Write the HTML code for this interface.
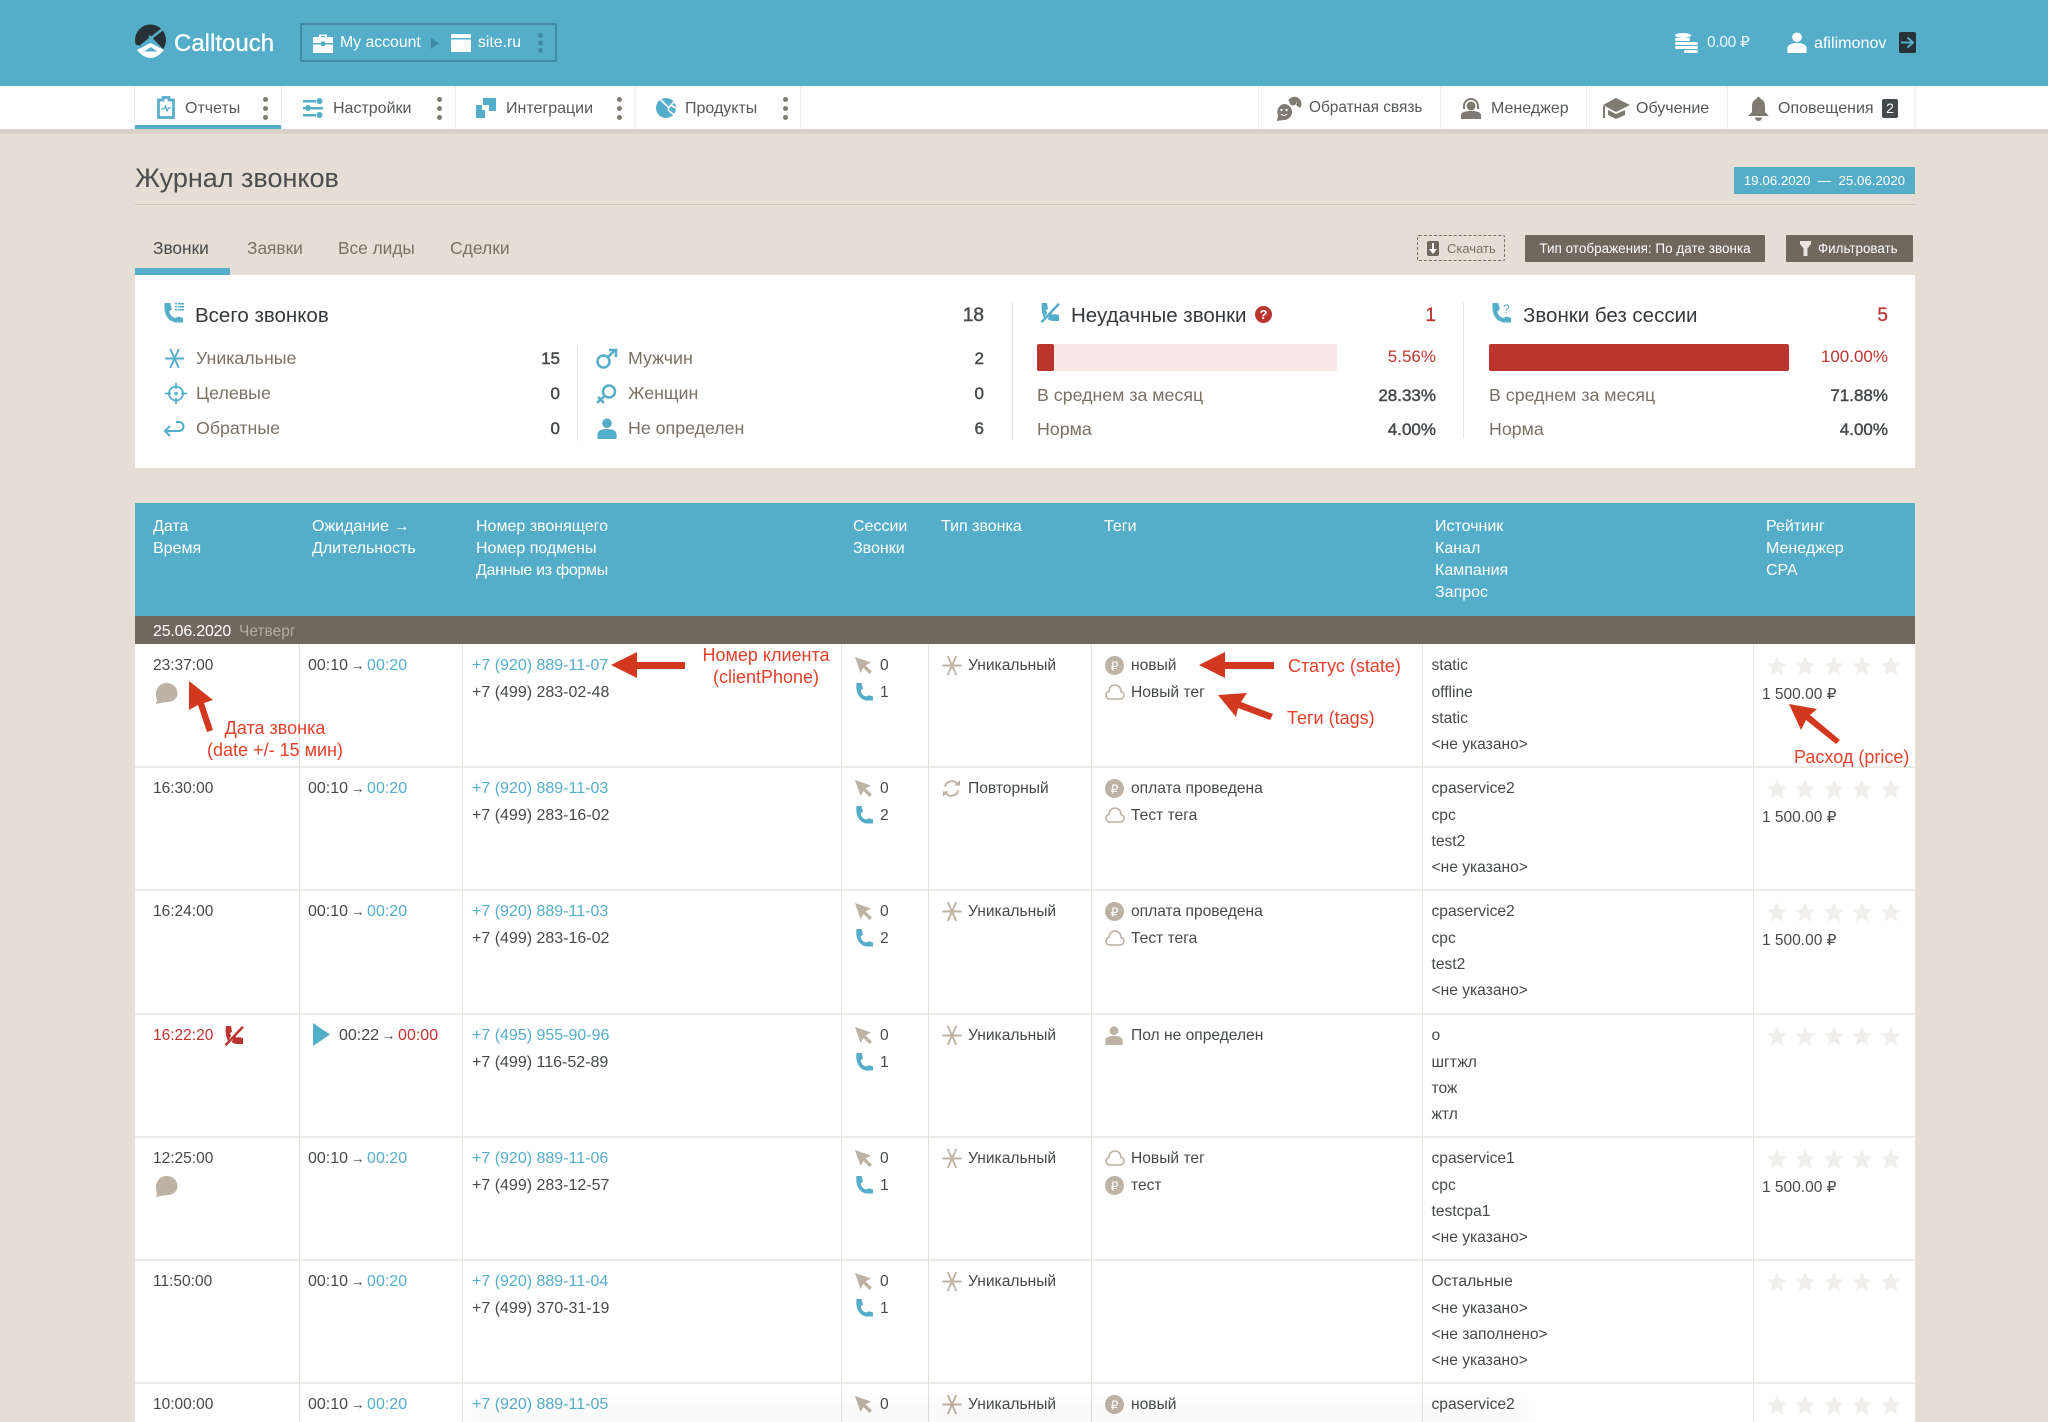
<!DOCTYPE html>
<html lang="ru"><head><meta charset="utf-8"><title>Журнал звонков</title>
<style>
html,body{margin:0;padding:0;width:2048px;height:1422px;overflow:hidden;background:#e5ded5}
#p{position:relative;width:2048px;height:1422px;overflow:hidden;background:#e5ded5;font-family:"Liberation Sans","DejaVu Sans",sans-serif;color:#45494b;font-size:15.600px}
.b{position:absolute}
.t{position:absolute;white-space:nowrap;line-height:20px}
svg{position:absolute;overflow:visible}
.w{color:#fff}
.r{position:absolute;left:135px;width:1780px;height:123px;background:#fff}
.hr{position:absolute;left:135px;width:1780px;height:2px;background:#efebe6}
.row{position:absolute;left:0;top:0;width:2048px}
.row .t{margin-top:1px}
.n{font-size:16px}
.tm{font-size:15.500px;margin-top:.5px!important}
.ar{display:inline-block;width:19px;text-align:center;font-size:14px;line-height:1;color:#45494b}
.l{color:#54aeca}
.red{color:#c0322d}
.h{font-size:16px;color:#fff;margin-top:1px}
.nav{font-size:16px;color:#55585a;margin-top:1px}
.sl{font-size:17.800px;color:#7a7165}
.sv{font-size:17px;color:#45494b;text-align:right;-webkit-text-stroke:.45px #45494b;margin-top:1px}
.st{font-size:20.500px;color:#35393c;margin-top:1px}
.an{font-family:"Liberation Sans",sans-serif;font-size:18px;color:#e5402a;text-align:center}
</style></head><body>
<div id="p">
<svg width="0" height="0" style="position:absolute">
<defs>
<symbol id="star" viewBox="0 0 20 20"><polygon points="10,0 13,7 20,7.600 14.600,12 16.400,20 10,15.600 3.600,20 5.400,12 0,7.600 7,7" fill="#f1efeb"/></symbol>
<symbol id="cur" viewBox="0 0 17 17"><path d="M0 0L16 5.500 10.500 8.500 17 14.500 14.500 17 8.500 11 5.500 16Z" fill="#bdb2a4"/></symbol>
<symbol id="ph" viewBox="0 0 18 18"><path d="M1.500 0h5l1.500 5.500-2.300 2c.3 3 2.300 5 5.300 6l3-1.300L18 13.500V17.500h-4.500C6 18 0 11 1.500 0Z" fill="#54aeca"/></symbol>
<symbol id="ast" viewBox="0 0 20 20"><path d="M0 10H20M5.500 0L14.500 20M14.500 0L5.500 20" stroke="currentColor" stroke-width="2" fill="none"/></symbol>
<symbol id="rep" viewBox="0 0 20 20"><path d="M3 8A7.500 7.500 0 0 1 16 5M17 12A7.500 7.500 0 0 1 4 15" stroke="#bdb2a4" stroke-width="2" fill="none"/><path d="M13 7H19V1ZM7 13H1V19Z" fill="#bdb2a4"/></symbol>
<symbol id="rub" viewBox="0 0 20 20"><circle cx="10" cy="10" r="10" fill="#bdb2a4"/><text x="10" y="15" font-size="13" fill="#fff" text-anchor="middle" font-family="Liberation Sans,DejaVu Sans,sans-serif">₽</text></symbol>
<symbol id="cld" viewBox="0 0 20 16"><path d="M5 15C2 15 1 13 1 11S2 8 4 7.500C4 3.500 7 1 10 1s6 2.500 6 6.500c2 .5 3 2 3 3.500s-1 4-4 4Z" stroke="#bdb2a4" stroke-width="1.600" fill="none"/></symbol>
<symbol id="bub" viewBox="0 0 23 22"><path d="M11.500 0C18 0 23 4.500 23 10.500S18 20 12 20C8 20 4 21.500 0 22 2 19.500 1.500 17 .8 14.500-.8 7 4 0 11.500 0Z" fill="#bdb2a4"/></symbol>
<symbol id="usr" viewBox="0 0 20 22"><circle cx="10" cy="5.500" r="5" fill="currentColor"/><path d="M0 22V17C0 13 5 11.500 10 11.500S20 13 20 17V22Z" fill="currentColor"/></symbol>
<symbol id="fail" viewBox="0 0 20 20"><path d="M2 0h5l1 6-2 1 1 3-3 5C2 11 1 5 2 0ZM11 10l2 2 1-1 5 1v6h-6.500a11 11 0 0 1-5-2ZM18 0l2 1.500L2.500 20 .5 18.500Z" fill="currentColor"/></symbol>
<symbol id="dot3" viewBox="0 0 5 23"><circle cx="2.500" cy="2.500" r="2.500" fill="#7f7a72"/><circle cx="2.500" cy="11.500" r="2.500" fill="#7f7a72"/><circle cx="2.500" cy="20.500" r="2.500" fill="#7f7a72"/></symbol>
</defs></svg>

<!-- header -->
<div class="b" style="left:0;top:0;width:2048px;height:86px;background:#54aeca"></div>
<svg style="left:135px;top:25px" width="31" height="34" viewBox="0 0 31 34"><circle cx="15.500" cy="15" r="15.500" fill="#263238"/><path d="M29 3L6 21M14 11L31 29" stroke="#54aeca" stroke-width="2.500" fill="none"/><path d="M-1 19L6 21 15.500 13 31 29 31 34H0Z" fill="#54aeca"/><path d="M15.500 18L2 25Q15.500 41 29 25Z" fill="#fff"/><path d="M15.700 22L9 26.500H22.300Z" fill="#54aeca"/></svg>
<div class="t w" style="left:174px;top:34px;font-size:24px;-webkit-text-stroke:.3px #fff">Calltouch</div>
<div class="b" style="left:300px;top:23px;width:257px;height:39px;box-sizing:border-box;border:2px solid #3f89a6;border-radius:2px"></div>
<svg style="left:313px;top:33px" width="20" height="20" viewBox="0 0 20 20"><path d="M6 4V1.500h8V4H20v6H12V8.500H8V10H0V4ZM8 4h4V3H8ZM0 11.500h8V13h4v-1.500h8V20H0Z" fill="#fff"/></svg>
<div class="t w" style="left:340px;top:33px;font-size:15.800px">My account</div>
<svg style="left:431px;top:38px" width="8" height="11"><path d="M0 0L8 5.500 0 11Z" fill="#3f89a6"/></svg>
<svg style="left:451px;top:34px" width="20" height="18"><path d="M1 0H19a1 1 0 0 1 1 1V4H0V1a1 1 0 0 1 1-1ZM0 5.500H20V17a1 1 0 0 1-1 1H1a1 1 0 0 1-1-1Z" fill="#fff"/></svg>
<div class="t w" style="left:478px;top:33px;font-size:15.800px">site.ru</div>
<svg style="left:538px;top:33px" width="5" height="20"><circle cx="2.500" cy="2.500" r="2.500" fill="#3f89a6"/><circle cx="2.500" cy="10" r="2.500" fill="#3f89a6"/><circle cx="2.500" cy="17.500" r="2.500" fill="#3f89a6"/></svg>

<svg style="left:1674px;top:33px" width="24" height="20" viewBox="0 0 24 20"><g fill="#fff"><ellipse cx="9" cy="2.500" rx="8" ry="2.500"/><rect x="1" y="5" width="15" height="3" rx="1.500"/><rect x="1" y="9" width="15" height="3" rx="1.500"/><rect x="1" y="13" width="10" height="3" rx="1.500"/><rect x="10" y="9" width="14" height="3" rx="1.500"/><rect x="10" y="13" width="14" height="3" rx="1.500"/><rect x="10" y="17" width="14" height="3" rx="1.500"/></g></svg>
<div class="t w" style="left:1707px;top:33px;font-size:15.500px;letter-spacing:-.3px;opacity:.9">0.00 ₽</div>
<svg style="left:1787px;top:32px;color:#fff" width="20" height="21"><use href="#usr"/></svg>
<div class="t w" style="left:1814px;top:33px;font-size:16.100px">afilimonov</div>
<div class="b" style="left:1899px;top:32px;width:17px;height:21px;background:#263238;border-radius:2px"></div>
<svg style="left:1901px;top:36px" width="13" height="13"><path d="M0 6.500H11M6.500 1.500L12 6.500 6.500 11.500" stroke="#54aeca" stroke-width="2" fill="none"/></svg>

<!-- nav -->
<div class="b" style="left:0;top:86px;width:2048px;height:43px;background:#fff"></div>
<div class="b" style="left:0;top:129px;width:2048px;height:5px;background:#d8d1c8"></div>
<div class="b" style="left:135px;top:125px;width:146px;height:4px;background:#54aeca"></div>
<div class="b" style="left:134px;top:86px;width:1px;height:43px;background:#eeeeee"></div>
<div class="b" style="left:281px;top:86px;width:1px;height:43px;background:#eeeeee"></div>
<div class="b" style="left:455px;top:86px;width:1px;height:43px;background:#eeeeee"></div>
<div class="b" style="left:635px;top:86px;width:1px;height:43px;background:#eeeeee"></div>
<div class="b" style="left:800px;top:86px;width:1px;height:43px;background:#eeeeee"></div>
<div class="b" style="left:1258px;top:86px;width:1px;height:43px;background:#eeeeee"></div>
<div class="b" style="left:1440px;top:86px;width:1px;height:43px;background:#eeeeee"></div>
<div class="b" style="left:1586px;top:86px;width:1px;height:43px;background:#eeeeee"></div>
<div class="b" style="left:1727px;top:86px;width:1px;height:43px;background:#eeeeee"></div>
<div class="b" style="left:1915px;top:86px;width:1px;height:43px;background:#eeeeee"></div>

<svg style="left:157px;top:96px" width="18" height="23" viewBox="0 0 18 23"><path d="M1.500 4H6V1.500h6V4H16.500V21.500H1.500Z" fill="none" stroke="#54aeca" stroke-width="2.700"/><path d="M4 13H7L8.500 10 10 15 11.500 12H14" stroke="#54aeca" stroke-width="1.300" fill="none"/></svg>
<div class="t nav" style="left:185px;top:98px">Отчеты</div>
<svg style="left:263px;top:97px" width="5" height="23"><use href="#dot3"/></svg>
<svg style="left:303px;top:98px" width="20" height="20" viewBox="0 0 20 20"><g fill="#54aeca"><rect x="0" y="2" width="13" height="2.500"/><circle cx="16.500" cy="3" r="3"/><rect x="8" y="9" width="12" height="2.500"/><rect x="0" y="9" width="2" height="2.500"/><circle cx="5" cy="10" r="3"/><rect x="0" y="16" width="13" height="2.500"/><circle cx="16.500" cy="17" r="3"/></g></svg>
<div class="t nav" style="left:333px;top:98px">Настройки</div>
<svg style="left:437px;top:97px" width="5" height="23"><use href="#dot3"/></svg>
<svg style="left:476px;top:98px" width="20" height="20" viewBox="0 0 20 20"><path d="M7 0H20V13H13V7H7ZM0 7H6V12H9V20H0Z" fill="#54aeca"/></svg>
<div class="t nav" style="left:506px;top:98px">Интеграции</div>
<svg style="left:617px;top:97px" width="5" height="23"><use href="#dot3"/></svg>
<svg style="left:656px;top:98px" width="20" height="20" viewBox="0 0 20 20"><circle cx="10" cy="10" r="10" fill="#54aeca"/><path d="M3.500 .5L12.500 9.500 19 3M12.500 9.500V12.500L19.500 18M14 7L21 10.500" stroke="#fff" stroke-width="1.600" fill="none"/></svg>
<div class="t nav" style="left:685px;top:98px">Продукты</div>
<svg style="left:783px;top:97px" width="5" height="23"><use href="#dot3"/></svg>

<svg style="left:1276px;top:95px" width="26" height="26" viewBox="0 0 26 26"><g fill="#7f7a72"><path d="M12 6A7 7 0 1 1 24 13L20 10A3 3 0 1 0 15 7Z"/><circle cx="17" cy="7" r="3.500" fill="#7f7a72"/><path d="M8 9A8 8 0 1 1 8 25L1 26 2 20A8 8 0 0 1 8 9Z"/></g><circle cx="5.500" cy="15" r="1.200" fill="#fff"/><circle cx="10.500" cy="15" r="1.200" fill="#fff"/><path d="M5 19Q8 22 11 19" stroke="#fff" fill="none"/></svg>
<div class="t nav" style="left:1309px;top:97px;font-size:15.400px">Обратная связь</div>
<svg style="left:1460px;top:97px" width="22" height="22" viewBox="0 0 22 22"><path d="M3 9A8 8 0 0 1 19 9V12H17V9A6 6 0 0 0 5 9V12H3Z" fill="#7f7a72"/><circle cx="11" cy="9" r="4.500" fill="#7f7a72"/><path d="M1 22V18C1 15 6 14 11 14S21 15 21 18V22Z" fill="#7f7a72"/></svg>
<div class="t nav" style="left:1491px;top:98px">Менеджер</div>
<svg style="left:1603px;top:98px" width="27" height="22" viewBox="0 0 27 22"><path d="M13 0L27 7 13 14 0 7ZM5 12L13 16 22 12V17L13 21 5 17Z" fill="#7f7a72"/><rect x="0" y="8" width="2" height="12" fill="#7f7a72"/></svg>
<div class="t nav" style="left:1636px;top:98px">Обучение</div>
<svg style="left:1747px;top:97px" width="23" height="24" viewBox="0 0 23 24"><path d="M11.500 0A2 2 0 0 1 13.500 2C17 3 18 6 18 10V15L22 19H1L5 15V10C5 6 6 3 9.500 2A2 2 0 0 1 11.500 0ZM8 20.500H15A3.500 3.500 0 0 1 8 20.500Z" fill="#7f7a72"/></svg>
<div class="t nav" style="left:1778px;top:98px">Оповещения</div>
<div class="b w" style="left:1882px;top:99px;width:16px;height:19px;background:#44494c;border-radius:2px;text-align:center;line-height:19px;font-size:14px">2</div>

<!-- title -->
<div class="t" style="left:135px;top:163px;font-size:27px;line-height:30px;color:#4a4d4e">Журнал звонков</div>
<div class="b" style="left:135px;top:204px;width:1780px;height:1px;background:#cfc8bd"></div>
<div class="b w" style="left:1734px;top:167px;width:181px;height:27px;background:#54aeca;text-align:center;line-height:27px;font-size:13.300px">19.06.2020 &nbsp;—&nbsp; 25.06.2020</div>

<div class="t" style="left:153px;top:238px;font-size:17.300px;color:#45494b">Звонки</div>
<div class="t" style="left:247px;top:238px;font-size:17.300px;color:#7a7165">Заявки</div>
<div class="t" style="left:338px;top:238px;font-size:17.300px;color:#7a7165">Все лиды</div>
<div class="t" style="left:450px;top:238px;font-size:17.500px;color:#7a7165">Сделки</div>
<div class="b" style="left:135px;top:268px;width:95px;height:7px;background:#54aeca"></div>

<div class="b" style="left:1417px;top:235px;width:88px;height:26px;box-sizing:border-box;border:1.500px dashed #7a7165;border-radius:2px"></div>
<div class="b" style="left:1427px;top:241px;width:12px;height:15px;background:#70685c;border-radius:2px"></div>
<svg style="left:1429px;top:243px" width="8" height="11"><path d="M3 0H5V6H8L4 11 0 6H3Z" fill="#fff"/></svg>
<div class="t" style="left:1447px;top:239px;font-size:13px;color:#7a7165">Скачать</div>
<div class="b w" style="left:1525px;top:235px;width:240px;height:27px;background:#70685c;text-align:center;line-height:27px;font-size:13.500px;border-radius:1px">Тип отображения: По дате звонка</div>
<div class="b" style="left:1786px;top:235px;width:127px;height:27px;background:#70685c;border-radius:1px"></div>
<svg style="left:1800px;top:241px" width="11" height="15"><path d="M0 0H11V3L7.500 7.500V15H3.500V7.500L0 3Z" fill="#e9e5df"/></svg>
<div class="t w" style="left:1818px;top:239px;font-size:13.400px">Фильтровать</div>

<!-- stats -->
<div class="b" style="left:135px;top:275px;width:1780px;height:193px;background:#fff"></div>
<div class="b" style="left:1012px;top:302px;width:1px;height:136px;background:#e8e3dc"></div>
<div class="b" style="left:1463px;top:302px;width:1px;height:136px;background:#e8e3dc"></div>
<div class="b" style="left:577px;top:345px;width:1px;height:96px;background:#e8e3dc"></div>

<svg style="left:163px;top:303px" width="20" height="20"><use href="#ph"/></svg>
<svg style="left:175px;top:303px" width="9" height="9"><path d="M0 0H2V1.500H0ZM3 0H9V1.500H3ZM0 3H2V4.500H0ZM3 3H9V4.500H3ZM0 6H2V7.500H0ZM3 6H9V7.500H3Z" fill="#54aeca"/></svg>
<div class="t st" style="left:195px;top:305px">Всего звонков</div>
<div class="t sv" style="left:900px;width:84px;top:305px;font-size:19px">18</div>

<svg style="left:164px;top:349px;color:#54aeca" width="21" height="19"><use href="#ast"/></svg>
<div class="t sl" style="left:196px;top:348px">Уникальные</div><div class="t sv" style="left:500px;width:60px;top:348px">15</div>
<svg style="left:165px;top:383px" width="22" height="21" viewBox="0 0 22 21"><circle cx="11" cy="10.500" r="7" stroke="#54aeca" stroke-width="1.800" fill="none"/><circle cx="11" cy="10.500" r="1.800" fill="#54aeca"/><path d="M11 0V6M11 15V21M0 10.500H6M16 10.500H22" stroke="#54aeca" stroke-width="1.800"/></svg>
<div class="t sl" style="left:196px;top:383px">Целевые</div><div class="t sv" style="left:500px;width:60px;top:383px">0</div>
<svg style="left:164px;top:421px" width="20" height="16" viewBox="0 0 20 16"><path d="M12 1H15A4 4 0 0 1 15 10H2" stroke="#54aeca" stroke-width="2" fill="none"/><path d="M6 5L1 10 6 15" stroke="#54aeca" stroke-width="2" fill="none"/></svg>
<div class="t sl" style="left:196px;top:418px">Обратные</div><div class="t sv" style="left:500px;width:60px;top:418px">0</div>

<svg style="left:596px;top:349px" width="21" height="20" viewBox="0 0 21 20"><circle cx="7.500" cy="12.500" r="6" stroke="#54aeca" stroke-width="2.500" fill="none"/><path d="M12 8L19 1M13 1H20V8" stroke="#54aeca" stroke-width="2.500" fill="none"/></svg>
<div class="t sl" style="left:628px;top:348px">Мужчин</div><div class="t sv" style="left:900px;width:84px;top:348px">2</div>
<svg style="left:596px;top:384px" width="21" height="20" viewBox="0 0 21 20"><circle cx="13" cy="7.500" r="6" stroke="#54aeca" stroke-width="2.500" fill="none"/><path d="M8.500 12L1 19M2 13L8 19" stroke="#54aeca" stroke-width="2.500" fill="none"/></svg>
<div class="t sl" style="left:628px;top:383px">Женщин</div><div class="t sv" style="left:900px;width:84px;top:383px">0</div>
<svg style="left:597px;top:418px;color:#54aeca" width="20" height="21"><use href="#usr"/></svg>
<div class="t sl" style="left:628px;top:418px">Не определен</div><div class="t sv" style="left:900px;width:84px;top:418px">6</div>

<svg style="left:1040px;top:303px;color:#54aeca" width="20" height="20"><use href="#fail"/></svg>
<div class="t st" style="left:1071px;top:305px">Неудачные звонки</div>
<div class="b w" style="left:1255px;top:306px;width:17px;height:17px;border-radius:50%;background:#bb352f;text-align:center;line-height:17px;font-size:13px;font-weight:bold">?</div>
<div class="t sv" style="left:1380px;width:56px;top:305px;font-size:19px;color:#bb352f;-webkit-text-stroke:.3px #bb352f">1</div>
<div class="b" style="left:1037px;top:344px;width:300px;height:27px;background:#f8e9e7;border-radius:2px"></div>
<div class="b" style="left:1037px;top:344px;width:17px;height:27px;background:#bb352f;border-radius:2px"></div>
<div class="t sl" style="left:1360px;width:76px;text-align:right;top:347px;color:#bb352f;font-size:17px">5.56%</div>
<div class="t sl" style="left:1037px;top:385px">В среднем за месяц</div><div class="t sv" style="left:1360px;width:76px;top:385px">28.33%</div>
<div class="t sl" style="left:1037px;top:419px">Норма</div><div class="t sv" style="left:1360px;width:76px;top:419px">4.00%</div>

<svg style="left:1491px;top:303px" width="20" height="20"><use href="#ph"/></svg>
<div class="t" style="left:1503px;top:299px;font-size:12px;color:#54aeca">?</div>
<div class="t st" style="left:1523px;top:305px">Звонки без сессии</div>
<div class="t sv" style="left:1830px;width:58px;top:305px;font-size:19px;color:#bb352f;-webkit-text-stroke:.3px #bb352f">5</div>
<div class="b" style="left:1489px;top:344px;width:300px;height:27px;background:#bb352f;border-radius:2px"></div>
<div class="t sl" style="left:1790px;width:98px;text-align:right;top:347px;color:#bb352f;font-size:17px">100.00%</div>
<div class="t sl" style="left:1489px;top:385px">В среднем за месяц</div><div class="t sv" style="left:1810px;width:78px;top:385px">71.88%</div>
<div class="t sl" style="left:1489px;top:419px">Норма</div><div class="t sv" style="left:1810px;width:78px;top:419px">4.00%</div>

<!-- table head -->
<div class="b" style="left:135px;top:503px;width:1780px;height:113px;background:#54aeca"></div>
<div class="t h" style="left:153px;top:516px">Дата</div><div class="t h" style="left:153px;top:538px">Время</div>
<div class="t h" style="left:312px;top:516px">Ожидание →</div><div class="t h" style="left:312px;top:538px">Длительность</div>
<div class="t h" style="left:476px;top:516px">Номер звонящего</div><div class="t h" style="left:476px;top:538px">Номер подмены</div><div class="t h" style="left:476px;top:560px;letter-spacing:-.3px">Данные из формы</div>
<div class="t h" style="left:853px;top:516px">Сессии</div><div class="t h" style="left:853px;top:538px">Звонки</div>
<div class="t h" style="left:941px;top:516px">Тип звонка</div>
<div class="t h" style="left:1104px;top:516px">Теги</div>
<div class="t h" style="left:1435px;top:516px">Источник</div><div class="t h" style="left:1435px;top:538px">Канал</div><div class="t h" style="left:1435px;top:560px">Кампания</div><div class="t h" style="left:1435px;top:582px">Запрос</div>
<div class="t h" style="left:1766px;top:516px">Рейтинг</div><div class="t h" style="left:1766px;top:538px">Менеджер</div><div class="t h" style="left:1766px;top:560px">CPA</div>

<div class="b" style="left:135px;top:616px;width:1780px;height:28px;background:#70685c"></div>
<div class="t w" style="left:153px;top:622px;font-size:16px;letter-spacing:-.2px">25.06.2020</div>
<div class="t" style="left:239px;top:622px;font-size:15.500px;color:#b5ac9f">Четверг</div>

<!-- rows bg -->
<div class="r" style="top:644px"></div>
<div class="r" style="top:767px"></div>
<div class="r" style="top:890px;height:124px"></div>
<div class="r" style="top:1014px"></div>
<div class="r" style="top:1137px"></div>
<div class="r" style="top:1260px"></div>
<div class="r" style="top:1383px;height:39px"></div>
<div class="hr" style="top:766px"></div>
<div class="hr" style="top:889px"></div>
<div class="hr" style="top:1013px"></div>
<div class="hr" style="top:1136px"></div>
<div class="hr" style="top:1259px"></div>
<div class="hr" style="top:1382px"></div>
<div class="b" style="left:299px;top:644px;width:1px;height:778px;background:#e5e0d9"></div>
<div class="b" style="left:462px;top:644px;width:1px;height:778px;background:#e5e0d9"></div>
<div class="b" style="left:841px;top:644px;width:1px;height:778px;background:#e5e0d9"></div>
<div class="b" style="left:928px;top:644px;width:1px;height:778px;background:#e5e0d9"></div>
<div class="b" style="left:1091px;top:644px;width:1px;height:778px;background:#e5e0d9"></div>
<div class="b" style="left:1422px;top:644px;width:1px;height:778px;background:#e5e0d9"></div>
<div class="b" style="left:1753px;top:644px;width:1px;height:778px;background:#e5e0d9"></div>

<!-- row 1 -->
<div class="row" style="top:644px">
<div class="t tm" style="left:153px;top:11px">23:37:00</div>
<svg style="left:155px;top:39px" width="23" height="21"><use href="#bub"/></svg>
<div class="t n" style="left:308px;top:11px">00:10<span class="ar">→</span><span class="l">00:20</span></div>
<div class="t n l" style="left:472px;top:11px">+7 (920) 889-11-07</div><div class="t n" style="left:472px;top:38px">+7 (499) 283-02-48</div>
<svg style="left:855px;top:13px" width="17" height="17"><use href="#cur"/></svg><div class="t" style="left:880px;top:11px">0</div>
<svg style="left:855px;top:39px" width="18" height="18"><use href="#ph"/></svg><div class="t" style="left:880px;top:38px">1</div>
<svg style="left:942px;top:12px;color:#bdb2a4" width="20" height="19"><use href="#ast"/></svg><div class="t" style="left:968px;top:11px">Уникальный</div>
<svg style="left:1105px;top:12px" width="19" height="19"><use href="#rub"/></svg><div class="t" style="left:1131px;top:11px">новый</div>
<svg style="left:1105px;top:40px" width="20" height="16"><use href="#cld"/></svg><div class="t" style="left:1131px;top:38px">Новый тег</div>
<div class="t" style="left:1431.500px;top:11px">static</div><div class="t" style="left:1431.500px;top:38px">offline</div><div class="t" style="left:1431.500px;top:64px">static</div><div class="t" style="left:1431.500px;top:90px">&lt;не указано&gt;</div>
<svg style="left:1767px;top:12px" width="20" height="20"><use href="#star"/></svg><svg style="left:1795px;top:12px" width="20" height="20"><use href="#star"/></svg><svg style="left:1824px;top:12px" width="20" height="20"><use href="#star"/></svg><svg style="left:1852px;top:12px" width="20" height="20"><use href="#star"/></svg><svg style="left:1881px;top:12px" width="20" height="20"><use href="#star"/></svg>
<div class="t n" style="left:1762px;top:40px;font-size:15.500px">1 500.00 ₽</div>
</div>
<!-- row 2 -->
<div class="row" style="top:767px">
<div class="t tm" style="left:153px;top:11px">16:30:00</div>
<div class="t n" style="left:308px;top:11px">00:10<span class="ar">→</span><span class="l">00:20</span></div>
<div class="t n l" style="left:472px;top:11px">+7 (920) 889-11-03</div><div class="t n" style="left:472px;top:38px">+7 (499) 283-16-02</div>
<svg style="left:855px;top:13px" width="17" height="17"><use href="#cur"/></svg><div class="t" style="left:880px;top:11px">0</div>
<svg style="left:855px;top:39px" width="18" height="18"><use href="#ph"/></svg><div class="t" style="left:880px;top:38px">2</div>
<svg style="left:942px;top:12px" width="19" height="19"><use href="#rep"/></svg><div class="t" style="left:968px;top:11px">Повторный</div>
<svg style="left:1105px;top:12px" width="19" height="19"><use href="#rub"/></svg><div class="t" style="left:1131px;top:11px">оплата проведена</div>
<svg style="left:1105px;top:40px" width="20" height="16"><use href="#cld"/></svg><div class="t" style="left:1131px;top:38px">Тест тега</div>
<div class="t" style="left:1431.500px;top:11px">cpaservice2</div><div class="t" style="left:1431.500px;top:38px">cpc</div><div class="t" style="left:1431.500px;top:64px">test2</div><div class="t" style="left:1431.500px;top:90px">&lt;не указано&gt;</div>
<svg style="left:1767px;top:12px" width="20" height="20"><use href="#star"/></svg><svg style="left:1795px;top:12px" width="20" height="20"><use href="#star"/></svg><svg style="left:1824px;top:12px" width="20" height="20"><use href="#star"/></svg><svg style="left:1852px;top:12px" width="20" height="20"><use href="#star"/></svg><svg style="left:1881px;top:12px" width="20" height="20"><use href="#star"/></svg>
<div class="t n" style="left:1762px;top:40px;font-size:15.500px">1 500.00 ₽</div>
</div>
<!-- row 3 -->
<div class="row" style="top:890px">
<div class="t tm" style="left:153px;top:11px">16:24:00</div>
<div class="t n" style="left:308px;top:11px">00:10<span class="ar">→</span><span class="l">00:20</span></div>
<div class="t n l" style="left:472px;top:11px">+7 (920) 889-11-03</div><div class="t n" style="left:472px;top:38px">+7 (499) 283-16-02</div>
<svg style="left:855px;top:13px" width="17" height="17"><use href="#cur"/></svg><div class="t" style="left:880px;top:11px">0</div>
<svg style="left:855px;top:39px" width="18" height="18"><use href="#ph"/></svg><div class="t" style="left:880px;top:38px">2</div>
<svg style="left:942px;top:12px;color:#bdb2a4" width="20" height="19"><use href="#ast"/></svg><div class="t" style="left:968px;top:11px">Уникальный</div>
<svg style="left:1105px;top:12px" width="19" height="19"><use href="#rub"/></svg><div class="t" style="left:1131px;top:11px">оплата проведена</div>
<svg style="left:1105px;top:40px" width="20" height="16"><use href="#cld"/></svg><div class="t" style="left:1131px;top:38px">Тест тега</div>
<div class="t" style="left:1431.500px;top:11px">cpaservice2</div><div class="t" style="left:1431.500px;top:38px">cpc</div><div class="t" style="left:1431.500px;top:64px">test2</div><div class="t" style="left:1431.500px;top:90px">&lt;не указано&gt;</div>
<svg style="left:1767px;top:12px" width="20" height="20"><use href="#star"/></svg><svg style="left:1795px;top:12px" width="20" height="20"><use href="#star"/></svg><svg style="left:1824px;top:12px" width="20" height="20"><use href="#star"/></svg><svg style="left:1852px;top:12px" width="20" height="20"><use href="#star"/></svg><svg style="left:1881px;top:12px" width="20" height="20"><use href="#star"/></svg>
<div class="t n" style="left:1762px;top:40px;font-size:15.500px">1 500.00 ₽</div>
</div>
<!-- row 4 -->
<div class="row" style="top:1014px">
<div class="t tm red" style="left:153px;top:11px">16:22:20</div>
<svg style="left:224px;top:12px;color:#bb352f" width="20" height="20"><use href="#fail"/></svg>
<svg style="left:313px;top:9px" width="17" height="23"><path d="M0 0L17 11.500 0 23Z" fill="#54aeca"/></svg>
<div class="t n" style="left:339px;top:11px">00:22<span class="ar">→</span><span class="red">00:00</span></div>
<div class="t n l" style="left:472px;top:11px">+7 (495) 955-90-96</div><div class="t n" style="left:472px;top:38px">+7 (499) 116-52-89</div>
<svg style="left:855px;top:13px" width="17" height="17"><use href="#cur"/></svg><div class="t" style="left:880px;top:11px">0</div>
<svg style="left:855px;top:39px" width="18" height="18"><use href="#ph"/></svg><div class="t" style="left:880px;top:38px">1</div>
<svg style="left:942px;top:12px;color:#bdb2a4" width="20" height="19"><use href="#ast"/></svg><div class="t" style="left:968px;top:11px">Уникальный</div>
<svg style="left:1105px;top:12px;color:#bdb2a4" width="18" height="19"><use href="#usr"/></svg><div class="t" style="left:1131px;top:11px">Пол не определен</div>
<div class="t" style="left:1431.500px;top:11px">о</div><div class="t" style="left:1431.500px;top:38px">шгтжл</div><div class="t" style="left:1431.500px;top:64px">тож</div><div class="t" style="left:1431.500px;top:90px">жтл</div>
<svg style="left:1767px;top:12px" width="20" height="20"><use href="#star"/></svg><svg style="left:1795px;top:12px" width="20" height="20"><use href="#star"/></svg><svg style="left:1824px;top:12px" width="20" height="20"><use href="#star"/></svg><svg style="left:1852px;top:12px" width="20" height="20"><use href="#star"/></svg><svg style="left:1881px;top:12px" width="20" height="20"><use href="#star"/></svg>
</div>
<!-- row 5 -->
<div class="row" style="top:1137px">
<div class="t tm" style="left:153px;top:11px">12:25:00</div>
<svg style="left:155px;top:39px" width="23" height="21"><use href="#bub"/></svg>
<div class="t n" style="left:308px;top:11px">00:10<span class="ar">→</span><span class="l">00:20</span></div>
<div class="t n l" style="left:472px;top:11px">+7 (920) 889-11-06</div><div class="t n" style="left:472px;top:38px">+7 (499) 283-12-57</div>
<svg style="left:855px;top:13px" width="17" height="17"><use href="#cur"/></svg><div class="t" style="left:880px;top:11px">0</div>
<svg style="left:855px;top:39px" width="18" height="18"><use href="#ph"/></svg><div class="t" style="left:880px;top:38px">1</div>
<svg style="left:942px;top:12px;color:#bdb2a4" width="20" height="19"><use href="#ast"/></svg><div class="t" style="left:968px;top:11px">Уникальный</div>
<svg style="left:1105px;top:13px" width="20" height="16"><use href="#cld"/></svg><div class="t" style="left:1131px;top:11px">Новый тег</div>
<svg style="left:1105px;top:39px" width="19" height="19"><use href="#rub"/></svg><div class="t" style="left:1131px;top:38px">тест</div>
<div class="t" style="left:1431.500px;top:11px">cpaservice1</div><div class="t" style="left:1431.500px;top:38px">cpc</div><div class="t" style="left:1431.500px;top:64px">testcpa1</div><div class="t" style="left:1431.500px;top:90px">&lt;не указано&gt;</div>
<svg style="left:1767px;top:12px" width="20" height="20"><use href="#star"/></svg><svg style="left:1795px;top:12px" width="20" height="20"><use href="#star"/></svg><svg style="left:1824px;top:12px" width="20" height="20"><use href="#star"/></svg><svg style="left:1852px;top:12px" width="20" height="20"><use href="#star"/></svg><svg style="left:1881px;top:12px" width="20" height="20"><use href="#star"/></svg>
<div class="t n" style="left:1762px;top:40px;font-size:15.500px">1 500.00 ₽</div>
</div>
<!-- row 6 -->
<div class="row" style="top:1260px">
<div class="t tm" style="left:153px;top:11px">11:50:00</div>
<div class="t n" style="left:308px;top:11px">00:10<span class="ar">→</span><span class="l">00:20</span></div>
<div class="t n l" style="left:472px;top:11px">+7 (920) 889-11-04</div><div class="t n" style="left:472px;top:38px">+7 (499) 370-31-19</div>
<svg style="left:855px;top:13px" width="17" height="17"><use href="#cur"/></svg><div class="t" style="left:880px;top:11px">0</div>
<svg style="left:855px;top:39px" width="18" height="18"><use href="#ph"/></svg><div class="t" style="left:880px;top:38px">1</div>
<svg style="left:942px;top:12px;color:#bdb2a4" width="20" height="19"><use href="#ast"/></svg><div class="t" style="left:968px;top:11px">Уникальный</div>
<div class="t" style="left:1431.500px;top:11px">Остальные</div><div class="t" style="left:1431.500px;top:38px">&lt;не указано&gt;</div><div class="t" style="left:1431.500px;top:64px">&lt;не заполнено&gt;</div><div class="t" style="left:1431.500px;top:90px">&lt;не указано&gt;</div>
<svg style="left:1767px;top:12px" width="20" height="20"><use href="#star"/></svg><svg style="left:1795px;top:12px" width="20" height="20"><use href="#star"/></svg><svg style="left:1824px;top:12px" width="20" height="20"><use href="#star"/></svg><svg style="left:1852px;top:12px" width="20" height="20"><use href="#star"/></svg><svg style="left:1881px;top:12px" width="20" height="20"><use href="#star"/></svg>
</div>
<!-- row 7 -->
<div class="row" style="top:1383px">
<div class="t tm" style="left:153px;top:11px">10:00:00</div>
<div class="t n" style="left:308px;top:11px">00:10<span class="ar">→</span><span class="l">00:20</span></div>
<div class="t n l" style="left:472px;top:11px">+7 (920) 889-11-05</div>
<svg style="left:855px;top:13px" width="17" height="17"><use href="#cur"/></svg><div class="t" style="left:880px;top:11px">0</div>
<svg style="left:942px;top:12px;color:#bdb2a4" width="20" height="19"><use href="#ast"/></svg><div class="t" style="left:968px;top:11px">Уникальный</div>
<svg style="left:1105px;top:12px" width="19" height="19"><use href="#rub"/></svg><div class="t" style="left:1131px;top:11px">новый</div>
<div class="t" style="left:1431.500px;top:11px">cpaservice2</div>
<svg style="left:1767px;top:12px" width="20" height="20"><use href="#star"/></svg><svg style="left:1795px;top:12px" width="20" height="20"><use href="#star"/></svg><svg style="left:1824px;top:12px" width="20" height="20"><use href="#star"/></svg><svg style="left:1852px;top:12px" width="20" height="20"><use href="#star"/></svg><svg style="left:1881px;top:12px" width="20" height="20"><use href="#star"/></svg>
</div>

<!-- bottom soft shadow -->
<div class="b" style="left:470px;top:1405px;width:1060px;height:17px;background:rgba(0,0,0,.035);filter:blur(10px)"></div>

<!-- annotations -->
<svg style="left:0;top:0" width="2048" height="1422">
<g fill="#d2381e">
<path d="M611 665L637 652V662H685V669H637V678Z"/>
<path d="M189 681L213 700 204 703 213 730 207 732 198 705 189 710Z"/>
<path d="M1199 665L1225 652V662H1274V669H1225V678Z"/>
<path d="M1218 695L1247 693 1241 702 1273 714 1270 720 1238 708 1236 717Z"/>
<path d="M1789 704L1817 709 1810 715 1840 740 1836 744 1806 720 1801 730Z"/>
</g>
</svg>
<div class="t an" style="left:690px;width:152px;top:645px">Номер клиента</div>
<div class="t an" style="left:690px;width:152px;top:667px">(clientPhone)</div>
<div class="t an" style="left:190px;width:170px;top:718px">Дата звонка</div>
<div class="t an" style="left:190px;width:170px;top:740px">(date +/- 15 мин)</div>
<div class="t an" style="left:1288px;top:656px">Статус (state)</div>
<div class="t an" style="left:1287px;top:708px">Теги (tags)</div>
<div class="t an" style="left:1794px;top:747px">Расход (price)</div>
</div>
</body></html>
